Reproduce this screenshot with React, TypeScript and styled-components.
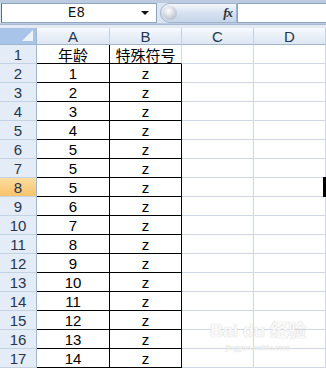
import React from "react"
import styled, { createGlobalStyle } from "styled-components"

const GlobalStyle = createGlobalStyle`
  html, body {
    margin: 0;
    padding: 0;
    background: #ffffff;
  }
  body {
    font-family: "Liberation Sans", Arial, "Noto Sans CJK SC", sans-serif;
    overflow: hidden;
  }
`

const Sheet = styled.div`
  position: relative;
  width: 326px;
  height: 368px;
  overflow: hidden;
  display: flex;
  flex-direction: column;
  background: #ffffff;
`

/* ---------- formula bar ---------- */

const FormulaBar = styled.div`
  height: 27px;
  box-sizing: border-box;
  padding-top: 3px;
  background: #bccbe0;
  display: flex;
  flex-direction: column;
`

const FormulaRow = styled.div`
  height: 20px;
  display: flex;
  align-items: stretch;
  background: #dce6f2;
`

const NameBox = styled.div`
  width: 156px;
  box-sizing: border-box;
  margin-left: 1px;
  border: 1px solid #8ea3bd;
  border-left-color: #5d6f88;
  background: #ffffff;
  display: flex;
  align-items: center;
  font-family: "Liberation Mono", "Courier New", monospace;
  font-size: 14px;
  color: #111111;
`

const NameText = styled.span`
  flex: 1;
  text-align: center;
  padding-left: 10px;
`

const DropArrow = styled.span`
  width: 0;
  height: 0;
  margin-right: 7px;
  border-left: 4px solid transparent;
  border-right: 4px solid transparent;
  border-top: 4px solid #111111;
`

const FxPill = styled.div`
  width: 77px;
  margin-left: 3px;
  box-sizing: border-box;
  border: 1px solid #9fb3cc;
  border-radius: 10px 0 0 10px;
  background: linear-gradient(#f4f7fb, #d4dff0 55%, #c7d6ea);
  display: flex;
  align-items: center;
  justify-content: space-between;
  padding: 0 4px 0 2px;
`

const Knob = styled.span`
  width: 14px;
  height: 14px;
  border-radius: 50%;
  background: radial-gradient(circle at 40% 35%, #ffffff, #c8ced6 60%, #9aa5b3);
`

const FxLabel = styled.span`
  font-family: "Liberation Serif", "Times New Roman", serif;
  font-style: italic;
  font-weight: bold;
  font-size: 13px;
  color: #333333;
  letter-spacing: -1px;
`

const FormulaInput = styled.div`
  flex: 1;
  box-sizing: border-box;
  border: 1px solid #8ea3bd;
  border-right: none;
  background: #ffffff;
`

const BarGap = styled.div`
  height: 4px;
  background: #e3eaf3;
  border-top: 1px solid #a9b9cf;
  box-sizing: border-box;
`

/* ---------- grid ---------- */

const Grid = styled.div`
  display: grid;
  grid-template-columns: 37px 73px 72px 72px 72px 40px;
  grid-auto-rows: 19px;
  grid-template-rows: 17px;
`

const Corner = styled.div`
  position: relative;
  box-sizing: border-box;
  background: #a9c4e9;
  border-right: 1px solid #9eb6ce;
  border-bottom: 1px solid #9eb6ce;
  &::after {
    content: "";
    position: absolute;
    right: 3px;
    bottom: 3px;
    width: 0;
    height: 0;
    border-left: 11px solid transparent;
    border-bottom: 11px solid #eef3fa;
  }
`

const ColHead = styled.div<{ $active?: boolean }>`
  box-sizing: border-box;
  border-right: 1px solid #c5d2e2;
  border-bottom: 1px solid #9eb6ce;
  background: ${p =>
    p.$active
      ? "linear-gradient(#fbe3a8, #f5c56a)"
      : "linear-gradient(#f8fafd, #e9eff7 50%, #dde6f2)"};
  display: flex;
  align-items: center;
  justify-content: center;
  font-size: 15px;
  color: #26364f;
`

const RowHead = styled.div<{ $active?: boolean }>`
  box-sizing: border-box;
  border-right: 1px solid #9eb6ce;
  border-bottom: 1px solid #c5d2e2;
  background: ${p => (p.$active ? "linear-gradient(#fcdda0, #f6c36a)" : "#e4ecf7")};
  display: flex;
  align-items: center;
  justify-content: center;
  font-size: 15px;
  color: #26364f;
`

const Cell = styled.div<{ $right?: string; $bottom?: string; $sel?: boolean }>`
  position: relative;
  box-sizing: border-box;
  border-right: 1px solid ${p => p.$right ?? "#d0d7e5"};
  border-bottom: 1px solid ${p => p.$bottom ?? "#d0d7e5"};
  display: flex;
  align-items: center;
  justify-content: center;
  font-size: 15px;
  color: #000000;
  font-family: "Liberation Sans", Arial, "Noto Sans CJK SC", sans-serif;
  &::before {
    content: "";
    display: ${p => (p.$sel ? "block" : "none")};
    position: absolute;
    left: -3px;
    top: -1px;
    bottom: -1px;
    width: 3px;
    background: #000000;
  }
`

/* ---------- watermark ---------- */

const Watermark = styled.div`
  position: absolute;
  left: 210px;
  top: 316px;
  display: flex;
  flex-direction: column;
  align-items: center;
  color: rgba(255, 255, 255, 0.9);
  text-shadow: 0 0 1px #d2d2d2, 0 0 1px #d2d2d2;
  pointer-events: none;
`

const MarkTitle = styled.div`
  font-size: 18px;
  font-weight: bold;
  font-family: "Liberation Sans", Arial, "Noto Sans CJK SC", sans-serif;
`

const MarkSub = styled.div`
  font-size: 8px;
  margin-top: 1px;
`

const ages = [1, 2, 3, 4, 5, 5, 5, 6, 7, 8, 9, 10, 11, 12, 13, 14]
const cols = ["A", "B", "C", "D", ""]
const black = "#000000"

export default function App() {
  const rows: React.ReactNode[] = []
  for (let r = 1; r <= 17; r++) {
    const first = r === 1
    const a = first ? "年龄" : String(ages[r - 2])
    const b = first ? "特殊符号" : "z"
    rows.push(
      <React.Fragment key={r}>
        <RowHead $active={r === 8}>{r}</RowHead>
        <Cell $right={black} $bottom={black}>{a}</Cell>
        <Cell $right={first ? undefined : black} $bottom={black}>{b}</Cell>
        <Cell />
        <Cell />
        <Cell $sel={r === 8} />
      </React.Fragment>
    )
  }

  return (
    <Sheet>
      <GlobalStyle />
      <FormulaBar>
        <FormulaRow>
          <NameBox>
            <NameText>E8</NameText>
            <DropArrow />
          </NameBox>
          <FxPill>
            <Knob />
            <FxLabel>fx</FxLabel>
          </FxPill>
          <FormulaInput />
        </FormulaRow>
      </FormulaBar>
      <BarGap />
      <Grid>
        <Corner />
        {cols.map((c, i) => (
          <ColHead key={i}>{c}</ColHead>
        ))}
        {rows}
      </Grid>
      <Watermark>
        <MarkTitle>Bai du 经验</MarkTitle>
        <MarkSub>jingyan.baidu.com</MarkSub>
      </Watermark>
    </Sheet>
  )
}
